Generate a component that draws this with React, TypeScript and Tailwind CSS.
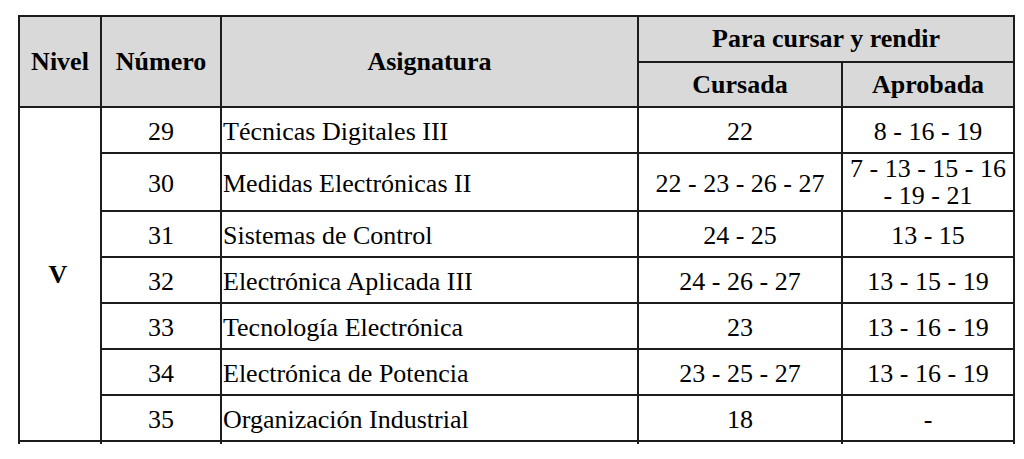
import React from "react";

const rows: { n: string; a: string; c: string; p: React.ReactNode; h: string }[] = [
  { n: "29", a: "Técnicas Digitales III", c: "22", p: "8 - 16 - 19", h: "h-[46px]" },
  {
    n: "30",
    a: "Medidas Electrónicas II",
    c: "22 - 23 - 26 - 27",
    p: (
      <div className="leading-[27px]">
        <div>7 - 13 - 15 - 16</div>
        <div>- 19 - 21</div>
      </div>
    ),
    h: "h-[58px]",
  },
  { n: "31", a: "Sistemas de Control", c: "24 - 25", p: "13 - 15", h: "h-[46px]" },
  { n: "32", a: "Electrónica Aplicada III", c: "24 - 26 - 27", p: "13 - 15 - 19", h: "h-[46px]" },
  { n: "33", a: "Tecnología Electrónica", c: "23", p: "13 - 16 - 19", h: "h-[46px]" },
  { n: "34", a: "Electrónica de Potencia", c: "23 - 25 - 27", p: "13 - 16 - 19", h: "h-[46px]" },
  { n: "35", a: "Organización Industrial", c: "18", p: "-", h: "h-[46px]" },
];

const cell = "border-2 border-[#1c1c1c] p-0 align-middle";

export default function App() {
  return (
    <div
      className="w-[1024px] h-[459px] bg-white text-black overflow-hidden pt-[15px] pl-[18px]"
      style={{ fontFamily: '"Liberation Serif", "Times New Roman", serif' }}
    >
      <table className="table-fixed border-collapse w-[995px] text-[26px] leading-[26px]">
        <colgroup>
          <col className="w-[82px]" />
          <col className="w-[120px]" />
          <col className="w-[417px]" />
          <col className="w-[204px]" />
          <col className="w-[172px]" />
        </colgroup>
        <thead>
          <tr className="h-[46px] bg-[#d9d9d9] font-bold">
            <th rowSpan={2} className={`${cell} text-center`}>Nivel</th>
            <th rowSpan={2} className={`${cell} text-center`}>Número</th>
            <th rowSpan={2} className={`${cell} text-center`}>Asignatura</th>
            <th colSpan={2} className={`${cell} text-center`}>Para cursar y rendir</th>
          </tr>
          <tr className="h-[45px] bg-[#d9d9d9] font-bold">
            <th className={`${cell} text-center`}>Cursada</th>
            <th className={`${cell} text-center`}>Aprobada</th>
          </tr>
        </thead>
        <tbody>
          {rows.map((r, i) => (
            <tr key={r.n} className={r.h}>
              {i === 0 && (
                <td rowSpan={7} className={`${cell} text-center font-bold pt-[2px] pr-[4px]`}>
                  V
                </td>
              )}
              <td className={`${cell} text-center pt-[3px]`}>{r.n}</td>
              <td className={`${cell} text-left pl-[1px] pt-[3px]`}>{r.a}</td>
              <td className={`${cell} text-center pt-[3px]`}>{r.c}</td>
              <td className={`${cell} text-center ${r.n === "30" ? "pt-0" : "pt-[3px]"}`}>{r.p}</td>
            </tr>
          ))}
          <tr className="h-[3px]">
            <td className="border-x-2 border-[#1c1c1c] p-0 h-[3px]" />
            <td className="border-x-2 border-[#1c1c1c] p-0 h-[3px]" />
            <td className="border-x-2 border-[#1c1c1c] p-0 h-[3px]" />
            <td className="border-x-2 border-[#1c1c1c] p-0 h-[3px]" />
            <td className="border-x-2 border-[#1c1c1c] p-0 h-[3px]" />
          </tr>
        </tbody>
      </table>
    </div>
  );
}
